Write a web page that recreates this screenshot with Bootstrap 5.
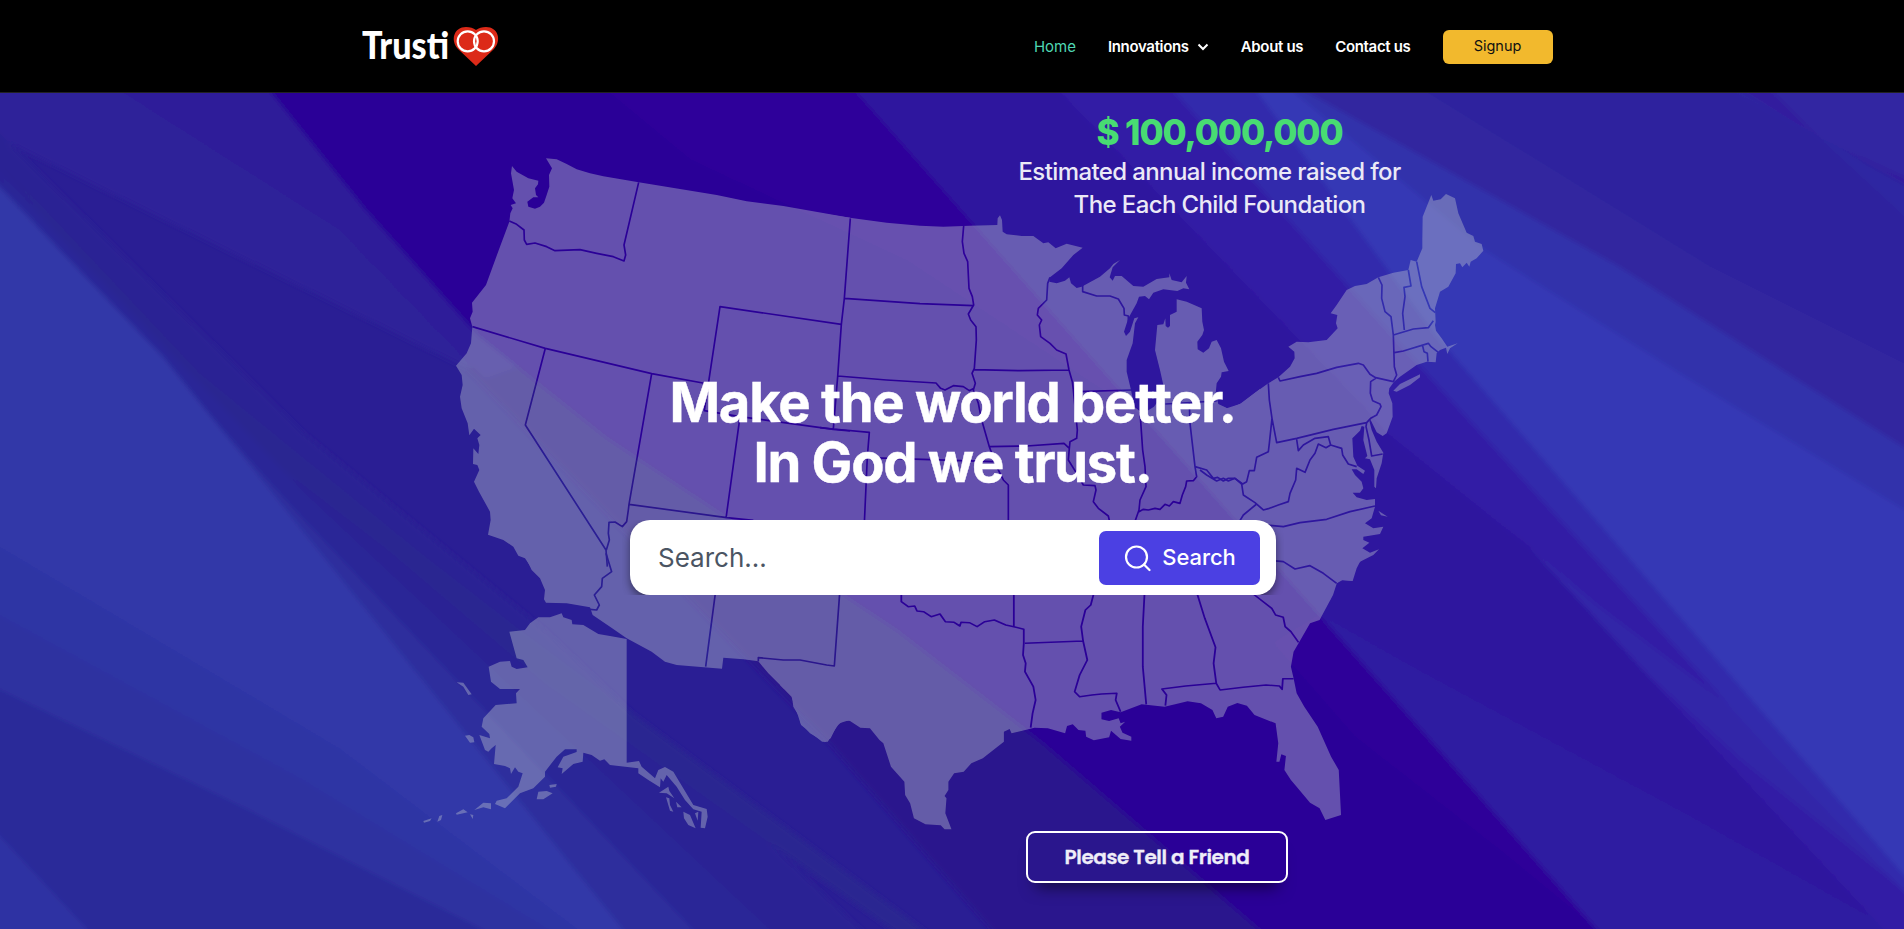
<!DOCTYPE html>
<html lang="en">
<head>
<meta charset="utf-8">
<meta name="viewport" content="width=device-width, initial-scale=1">
<title>Trusti</title>
<link href="https://cdn.jsdelivr.net/npm/bootstrap@5.3.0/dist/css/bootstrap.min.css" rel="stylesheet">
<style>
  body { font-family: Inter, "Liberation Sans", sans-serif; background: #2d0098; overflow: hidden; }
  .site-header { height: 93px; background: #000; border-bottom: 1px solid #222; padding: 2px 0 0 10px; }
  .site-wrap { width: 1191px; }
  .site-links { gap: 32px; font-size: 15px; font-weight: 600; letter-spacing: -.33px; line-height: 24px; }
  .site-links a { color: #fff; text-decoration: none; white-space: nowrap; }
  .site-links .current { color: #4fd8b4; font-weight: 400; letter-spacing: 0; }
  .site-links .btn-signup { width: 110px; height: 34px; padding: 0; border-radius: 6px; background: #f2b92d; color: #111; font-size: 14.500px; line-height: 32px; border: 0; letter-spacing: 0; }
  .hero { height: 836px; }
  .hero-art { position: absolute; inset: 0; width: 1904px; height: 836px; z-index: 0; }
  .hero-body { position: relative; z-index: 1; }
  .income { width: 402px; margin-left: 1018.500px; padding-top: 16px; color: #ebe9f6; font-size: 24px; font-weight: 500; line-height: 33px; letter-spacing: -.61px; text-align: center; white-space: nowrap; }
  .income-sum { color: #48dc72; font-size: 35px; font-weight: 800; line-height: 46px; letter-spacing: -1.1px; }
  .hero-title { font-size: 54.400px; font-weight: 700; line-height: 60px; letter-spacing: -1.28px; margin: 151px 0 0 1px; color: #fff; -webkit-text-stroke: .4px #fff; }
  .search-shell { width: 662px; padding: 0 8px; overflow: hidden; margin: 28px 0 0 622px; }
  .search-box { height: 75px; border-radius: 20px; background: #fff; padding: 0 16px 0 28px; box-shadow: 0 4px 8px rgba(0,0,0,.45); }
  .search-box .field { border: 0; outline: 0; background: transparent; font-size: 26px; color: #4b5563; min-width: 0; padding: 0; }
  .search-box .field::placeholder { color: #4b5563; opacity: 1; }
  .btn-find { width: 161px; height: 54px; border: 0; border-radius: 7px; background: #4b40e3; color: #fff; font-size: 22px; font-weight: 500; letter-spacing: -.1px; padding: 0; }
  .find-icon { margin: 2px 11px 0 1px; }
  .btn-friend { width: 262px; height: 52px; margin: 236px 0 0 1026px; border: 2px solid #fff; border-radius: 9px; color: #efedf8; font-family: Poppins, Lato, sans-serif; font-size: 20px; font-weight: 600; letter-spacing: -.4px; -webkit-text-stroke: .3px #efedf8; box-shadow: 0 14px 16px -10px rgba(0,0,0,.55); padding: 0; }
</style>
</head>
<body>
<header class="site-header d-flex justify-content-center">
  <nav class="site-wrap d-flex align-items-center justify-content-between">
    <a href="#" aria-label="Trusti" class="d-block">
      <svg width="140" height="60" viewBox="362 17 140 60" class="d-block">
        <text x="362" y="59" font-family="Lato" font-weight="900" font-size="38" fill="#fff" textLength="87" lengthAdjust="spacingAndGlyphs">Trusti</text>
        <path d="M476 66 L458 49 C450 40 454 27 466 27 Q472 27 476 30 Q480 27 486 27 C498 27 502 40 494 49Z" fill="#dc2a18"/>
        <g fill="none" stroke="#fff" stroke-width="2.2"><circle cx="467.700" cy="41.300" r="10"/><circle cx="484" cy="41.300" r="10"/></g>
      </svg>
    </a>
    <div class="site-links d-flex align-items-center">
      <a href="#" class="current">Home</a>
      <a href="#" class="d-flex align-items-center">Innovations
        <svg width="12" height="8" viewBox="0 0 12 8" class="ms-2" fill="none" stroke="#fff" stroke-width="2"><path d="M1.500 1.500 6 6l4.500-4.500"/></svg></a>
      <a href="#">About us</a>
      <a href="#">Contact us</a>
      <a href="#" class="btn btn-signup">Signup</a>
    </div>
  </nav>
</header>

<main class="hero position-relative overflow-hidden">
  <svg class="hero-art" viewBox="0 93 1904 836" aria-hidden="true">
    <defs>
      <filter id="soft" x="-5%" y="-5%" width="110%" height="110%"><feGaussianBlur stdDeviation="2.500"/></filter>
      <mask id="states" maskUnits="userSpaceOnUse" x="0" y="93" width="1904" height="836">
        <g fill="#fff">
          <g transform="translate(400 140) scale(.33333)">
            <path d="M438 55 470 58 500 72 530 88 570 100 610 109 716 127 840 147 950 165 1040 184 1150 198 1350 233V1280H392L375 1255 355 1247 340 1220 310 1200 264 1184 272 1140 270 1115 237 1055 222 1025 238 990 232 975 219 972 220 925 235 942 238 915 232 895 242 885 222 866 208 886 203 850 185 805 180 770 188 735 185 705 168 677 200 640 213 610 217 560 210 535 218 515 216 488 258 435 300 320 328 245 331 220 338 205 332 195 348 190 337 175 342 150 333 100 336 78 350 95 385 115 415 122 414 133 405 145 408 165 415 172 400 172 382 185 385 200 405 206 420 200 432 188 440 165 448 140 447 105 456 85Z"/>
          </g>
          <g transform="translate(410 560) scale(.33333)">
            <path d="M348-6 365 30 390 55 405 90 402 118 408 128 470 130 540 142 548 165 600 200 650 235 725 275 765 305 800 315 936 326 940 293 1000 298 1045 304 1075 340 1120 385 1145 402 1150 440 1168 470 1172 490 1200 520 1245 547 1262 535 1280 498 1300 482 1330 482V-6Z"/>
            <path d="M455 160 460 172 485 180 487 193 520 195 565 222 600 228 650 237V608L687 603 695 620 735 655 745 630 765 621 790 635 850 735 890 747 893 770 885 805 872 803 875 755 850 748 825 720 800 680 770 645 760 665 752 655 750 682 715 660 685 640 685 625 600 615 583 598 570 602 545 585 520 578 518 605 490 612 455 642 458 625 443 622 460 590 500 576 500 568 465 568 440 590 405 635 405 650 370 685 330 700 285 745 255 732 260 722 290 715 325 680 338 640 325 635 315 622 303 642 300 625 285 618 252 612 257 555 245 565 235 575 225 570 208 525 240 535 238 522 215 500 220 475 257 435 320 430 318 400 330 387 270 387 243 365 236 320 270 305 300 303 305 320 320 327 353 322 340 300 320 295 298 215 345 210 360 190 385 172 420 172Z"/>
            <path d="M140 367 160 368 185 403 175 405 160 380ZM165 527 178 525 190 532 193 547 180 548ZM380 718 385 695 410 693 428 700 400 718ZM418 675 440 672 438 680 420 683ZM193 750 220 728 243 730 243 748 220 742ZM138 760 160 748 173 757 140 764ZM180 763 190 765 188 777ZM82 785 88 768 97 765 93 780ZM40 783 65 775 60 783 42 788ZM747 698 775 680 778 693 793 715 770 700ZM768 712 778 715 780 735 790 755 780 752ZM798 725 815 742 802 742ZM820 755 840 765 857 805 835 795 822 775ZM855 760 865 755 863 782Z"/>
          </g>
          <g transform="translate(820 190) scale(.33333)">
            <path d="M-6 69 100 85 200 98 300 107 370 110 450 107 532 105 533 85 540 76 546 90 548 125 560 133 605 138 640 138 670 160 685 157 707 175 740 161 788 173 760 195 725 235 690 262 688 275 710 280 735 272 748 262 753 280 770 294 785 290 840 260 870 235 880 222 900 210 878 232 869 262 878 272 885 258 905 258 940 288 970 290 1010 267 1048 262V250L1055 270 1085 277 1100 258 1098 278 1108 298 1090 295 1072 303 1030 298 1000 308 987 328 975 318 957 320 950 340 925 385 912 425 918 438 930 425 943 385 955 382 945 400 938 460 920 510 920 545 933 600 943 650 960 664 980 664 1002 650 1020 625 1030 585 1020 540 1005 480 1012 405 1030 403 1036 385 1037 408 1044 413 1050 408 1050 375 1070 365 1070 328 1100 335 1145 355 1147 395 1152 420 1147 435 1132 455 1133 478 1150 488 1167 475 1175 455 1190 450 1203 475 1212 515 1226 543 1205 547 1203 560 1190 580 1187 610 1195 642 1225 656 1265 640 1320 597V1130H-6Z"/>
          </g>
          <g transform="translate(1200 180) scale(.33333)">
            <path d="M0 655 45 670 80 685 120 672 165 638 205 610 235 592 270 560 284 535 283 515 265 500 290 485 325 487 380 480 413 445 408 430 412 405 392 400 410 375 440 330 465 318 500 312 535 292 580 278 625 270 632 240 650 245 667 205 667 180 668 110 688 60 694 45 700 62 722 58 738 42 765 55 775 100 800 158 820 168 825 185 845 192 850 212 830 235 812 245 808 260 800 248 787 262 780 250 768 252 767 280 745 320 720 335 705 385 707 425 705 435 708 452 725 475 742 500 773 490 750 505 742 522 738 503 720 510 710 520 707 547 680 545 650 555 600 590 582 605 568 625 566 640 577 670 578 710 560 760 548 768 530 757 512 720 508 722 515 750 530 785 550 818 545 850 530 895 528 925 523 920 523 870 510 838 495 835 502 828 490 780 493 740 485 738 480 752 457 775 460 830 472 857 495 872 490 882 470 868 455 868 465 885 485 905 490 925 480 938 458 938 470 952 500 960 525 957 525 980 515 1015 495 1030 520 1045 550 1040 540 1062 490 1070 490 1080 508 1088 487 1105 510 1118 537 1108 520 1125 480 1145 470 1165 458 1203 420 1200 405 1215 390 1260H0Z"/>
            <path d="M535 992 563 1010 543 1006ZM580 632 600 612 660 583 660 592 630 615 590 635Z"/>
          </g>
          <g transform="translate(780 560) scale(.38270 .33333)">
            <path d="M0-30H1500L1520 0 1503 20 1495 62 1470 60 1455 70 1445 105 1410 180 1385 190 1355 250 1342 275 1335 320 1342 355 1350 400 1370 440 1405 500 1440 590 1460 630 1466 765 1425 780 1410 745 1385 728 1350 680 1335 660 1318 630 1322 588 1310 583 1305 605 1297 605 1302 550 1295 490 1240 465 1220 437 1195 429 1170 440 1158 470 1140 475 1130 450 1100 430 1065 424 1005 440 945 433 890 457 865 450 840 458 840 478 860 483 885 475 890 490 902 485 888 500 895 518 918 530 918 542 890 537 865 512 860 532 820 541 800 530 798 512 780 510 765 493 750 498 745 520 700 505 665 503 605 520 600 507 585 515 585 545 530 595 500 610 480 635 455 640 440 665 440 690 430 708 435 715 432 760 448 808 430 808 420 796 380 793 350 775 340 730 327 705 325 665 290 620 270 550 260 540 235 505 210 503 180 481 155 490 140 515 125 545 110 545 55 495 45 460 30 410 0 375Z"/>
          </g>
        </g>
        <g fill="none" stroke="#000" stroke-linejoin="round">
          <g transform="translate(400 140) scale(.33333)" stroke-width="5">
            <path d="M716 127 672 315 677 345 672 363 640 350 590 340 540 329 465 332 440 320 405 309 380 313 373 300 372 270 350 253 328 243M217 560 436 625 755 701 925 732 960 500 1324 553M436 625 376 855 618 1230 622 1280M755 701 687 1093 685 1110 680 1145 667 1160 645 1146 627 1147 625 1180 628 1200 619 1230M687 1093 980 1133 1060 1141M925 732 913 812 1020 830 1300 868 1350 873M1020 830 978 1135"/>
          </g>
          <g transform="translate(410 560) scale(.33333)" stroke-width="5">
            <path d="M588-20 605 35 577 55 575 80 553 105 568 135 560 150 540 148M916 100 887 320M1289 100 1273 318 1250 315 1170 300 1120 300 1045 293V304"/>
          </g>
          <g transform="translate(820 190) scale(.33333)" stroke-width="5">
            <path d="M91 85 73 325 64 403 53 560 40 717M73 325 300 341 460 347M53 558 200 570 348 579 362 595 375 600 400 587 430 590 448 602 462 595M431 108 427 155 432 190 443 215 447 295 457 320 461 345 445 372 452 390 468 410 469 450 463 535 456 550 466 580 460 600 475 640 485 690 508 770 530 830 550 870 565 885V1000M461 539 600 542 747 540M690 262 683 280 680 330 655 355 652 375 665 390 658 405 662 440 690 460 710 480 738 492 747 540 757 575 760 600 765 650 772 720 770 745 750 755 748 775 732 760 620 768 508 770M748 775 745 810 770 850 790 885 825 887 828 900 820 935 835 955 865 978 870 1000M775 605 935 600M788 285V305L830 318 870 318 895 327 912 355 913 375 925 378 925 395M960 665 968 780 975 830 978 890 960 930 957 960 943 1000M1108 640 1110 700 1125 830 1130 860 1120 872 1100 873 1097 890 1087 915 1080 940 1060 935 1048 948 1035 943 1020 958 1005 955 985 960 970 958 957 965M1036 642 1190 633M1125 830 1160 840 1180 865 1193 862 1210 873 1225 865 1245 865 1265 882M0 713 40 717 148 727 142 800 133 1000M142 803 520 815"/>
          </g>
          <g transform="translate(1200 180) scale(.33333)" stroke-width="5">
            <path d="M205 610 208 660 216 715 230 788 290 775 400 748 500 728 512 715 530 705 543 680 540 672 518 662 511 640 512 605 527 595M235 592 240 603 300 590 350 580 410 562 475 550 490 555 510 583 527 593 580 605 590 585 583 560 580 465 573 410 555 395 545 355 546 315 535 292M580 465 640 447 685 443 700 422M583 518 610 513 685 490 693 500 715 517M668 498 672 515 682 520 684 545M625 270 633 318 612 322 615 350 608 400 613 450M650 245 665 320 690 385 706 398M500 728 498 740 507 780 515 828 548 822M216 715 208 790 205 815 170 832 163 872 148 872 140 905 128 912 105 895 85 903 70 895 50 903 20 885 0 870M290 778 295 812 310 795 345 775 385 770 392 795 378 803 355 792 345 820 330 840 315 877 290 865 287 900 270 940 265 965 235 975 208 985 190 990 165 968 130 945 125 912M392 795 425 805 428 825 445 852 470 860M170 972 130 1005 118 1025M200 1035 250 1040 300 1028 380 1018 450 995 525 978M200 1140 250 1145 285 1167 330 1157 370 1180 410 1210"/>
          </g>
          <g transform="translate(780 560) scale(.38270 .33333)" stroke-width="4.700">
            <path d="M317 90V125L335 140 352 138 358 153 375 155 395 170 418 162 432 185 455 187 470 198 473 187 495 188 515 200 535 185 560 180 590 195 611 200 637 208V250L635 285 642 310 640 335 662 380 668 420 660 460 655 503M611 90V200M640 250 792 243M820 100 812 135 798 150 787 200 792 243 803 300 783 345 770 395 783 410 815 405 840 402 880 400 877 420 890 455M953 90 948 200 948 320 957 433M1087 90 1110 175 1138 262 1133 310 1140 370 1150 390 1210 382 1270 375 1305 378 1312 388 1314 356H1342M1140 370 1060 378 998 387 1010 405 1007 437M1225 90 1240 105 1285 145 1295 165 1315 172 1320 200 1335 215 1355 247"/>
          </g>
        </g>
      </mask>
    </defs>

    <rect x="0" y="93" width="1904" height="836" fill="#2a1e94"/>
    <g filter="url(#soft)">
      <path d="M400 300 828 742 1000 940H1320L900 500Z" fill="#29168d"/>
      <g transform="translate(0 90) scale(.60590 .53510)">
        <path d="M-20-20V80L770 520 900 500 420-20Z" fill="#2d2199"/>
        <path d="M170-20 560 260 800 540 900 500 430-20Z" fill="#2d1a99"/>
        <path d="M430-20 600 220 790 460 1000 650 1480 1010 1720 1220 2110 1600H3200V-20Z" fill="#2c0097"/>
        <path d="M980-20 1140 130 1500 320 1900 620 2400 1050 3200 1500V-20Z" fill="#2e059a"/>
        <path d="M-20 60 500 640 900 1010 1450 1600H900L-20 300Z" fill="#2a2194"/>
        <path d="M-20 110 330 530 700 870 860 1010 1560 1600H1510L900 1110 640 860 330 590Z" fill="#292691"/>
        <path d="M-20 130 500 750 1300 1600H900Z" fill="#2c2797"/>
        <path d="M-20 150 500 800 1170 1600H900Z" fill="#2d2d9d"/>
        <path d="M-20 160 270 500 1050 1600H-20Z" fill="#3139a8"/>
        <path d="M-20 840 560 1230 990 1600H-20Z" fill="#2f34a4"/>
        <path d="M-20 970 500 1290 950 1600H-20Z" fill="#2e30a0"/>
        <path d="M-20 1110 400 1340 850 1600H-20Z" fill="#2c2b99"/>
        <path d="M-20 1370 170 1600H-20Z" fill="#2f31a3"/>
      </g>
      <g transform="translate(1180 380) scale(.46173 .35013)">
        <path d="M290 660 930 1600H500L-100 700Z" fill="#2c0097"/>
        <path d="M300 670 200 750 380 1020 700 1350 930 1600Z" fill="#2d0499"/>
        <path d="M-720-850 300 670 930 1600H1620V-850Z" fill="#2f129e"/>
        <path d="M300 665 500 815 1100 1240 1600 1610H930Z" fill="#2f1aa1"/>
        <path d="M-280-850 400 80 470 190 760 480 1050 900 1560 1620H1620V-850Z" fill="#311ca5"/>
        <path d="M400 100 720 440 900 680 700 470Z" fill="#2e129e"/>
        <path d="M750 470 900 640 1200 940 1580 1390V1470L1220 1090 1020 850Z" fill="#3227a8"/>
      </g>
      <g transform="translate(950 90) scale(.60840 .53510)">
        <path d="M350-20 720 450 1360 1250 1620 1560V-20Z" fill="#322bac"/>
        <path d="M490-20 800 460 1570 1470 1620 1480V-20Z" fill="#3439b5"/>
        <path d="M540-20 880 300 1200 530 1620 820V-20Z" fill="#3231ab"/>
        <path d="M550-20 1100 330 1620 705V-20Z" fill="#30279f"/>
        <path d="M750-20 1250 330 1620 540V-20Z" fill="#2f239e"/>
        <path d="M1250-20 1430 90 1620 290V-20Z" fill="#2f28a2"/>
        <path d="M1270-20 1400 70 1620 210V-20Z" fill="#301f9e"/>
        <path d="M1330-20 1430 90 1620 190V-20Z" fill="#3026a2"/>
      </g>
    </g>
    <rect x="0" y="93" width="1904" height="836" fill="#b3bacd" fill-opacity=".43" mask="url(#states)"/>
  </svg>

  <div class="hero-body">
    <div class="income">
      <div class="income-sum">$ 100,000,000</div>
      <div class="pe-3 me-1">Estimated annual income raised for</div>
      <div>The Each Child Foundation</div>
    </div>
    <h1 class="hero-title text-center">Make the world better.<br>In God we trust.</h1>
    <div class="search-shell">
      <form class="search-box d-flex align-items-center">
        <input class="field flex-grow-1" type="text" placeholder="Search..." aria-label="Search">
        <button type="button" class="btn-find d-flex align-items-center justify-content-center">
          <svg width="27" height="27" viewBox="0 0 27 27" fill="none" stroke="#fff" stroke-width="2.200" stroke-linecap="round" class="find-icon flex-shrink-0"><circle cx="12.500" cy="12" r="10.500"/><path d="m20 19.500 5.500 5.500"/></svg>
          <span>Search</span>
        </button>
      </form>
    </div>
    <button type="button" class="btn btn-friend">Please Tell a Friend</button>
  </div>
</main>
<script src="https://cdn.jsdelivr.net/npm/bootstrap@5.3.0/dist/js/bootstrap.bundle.min.js"></script>
</body>
</html>
